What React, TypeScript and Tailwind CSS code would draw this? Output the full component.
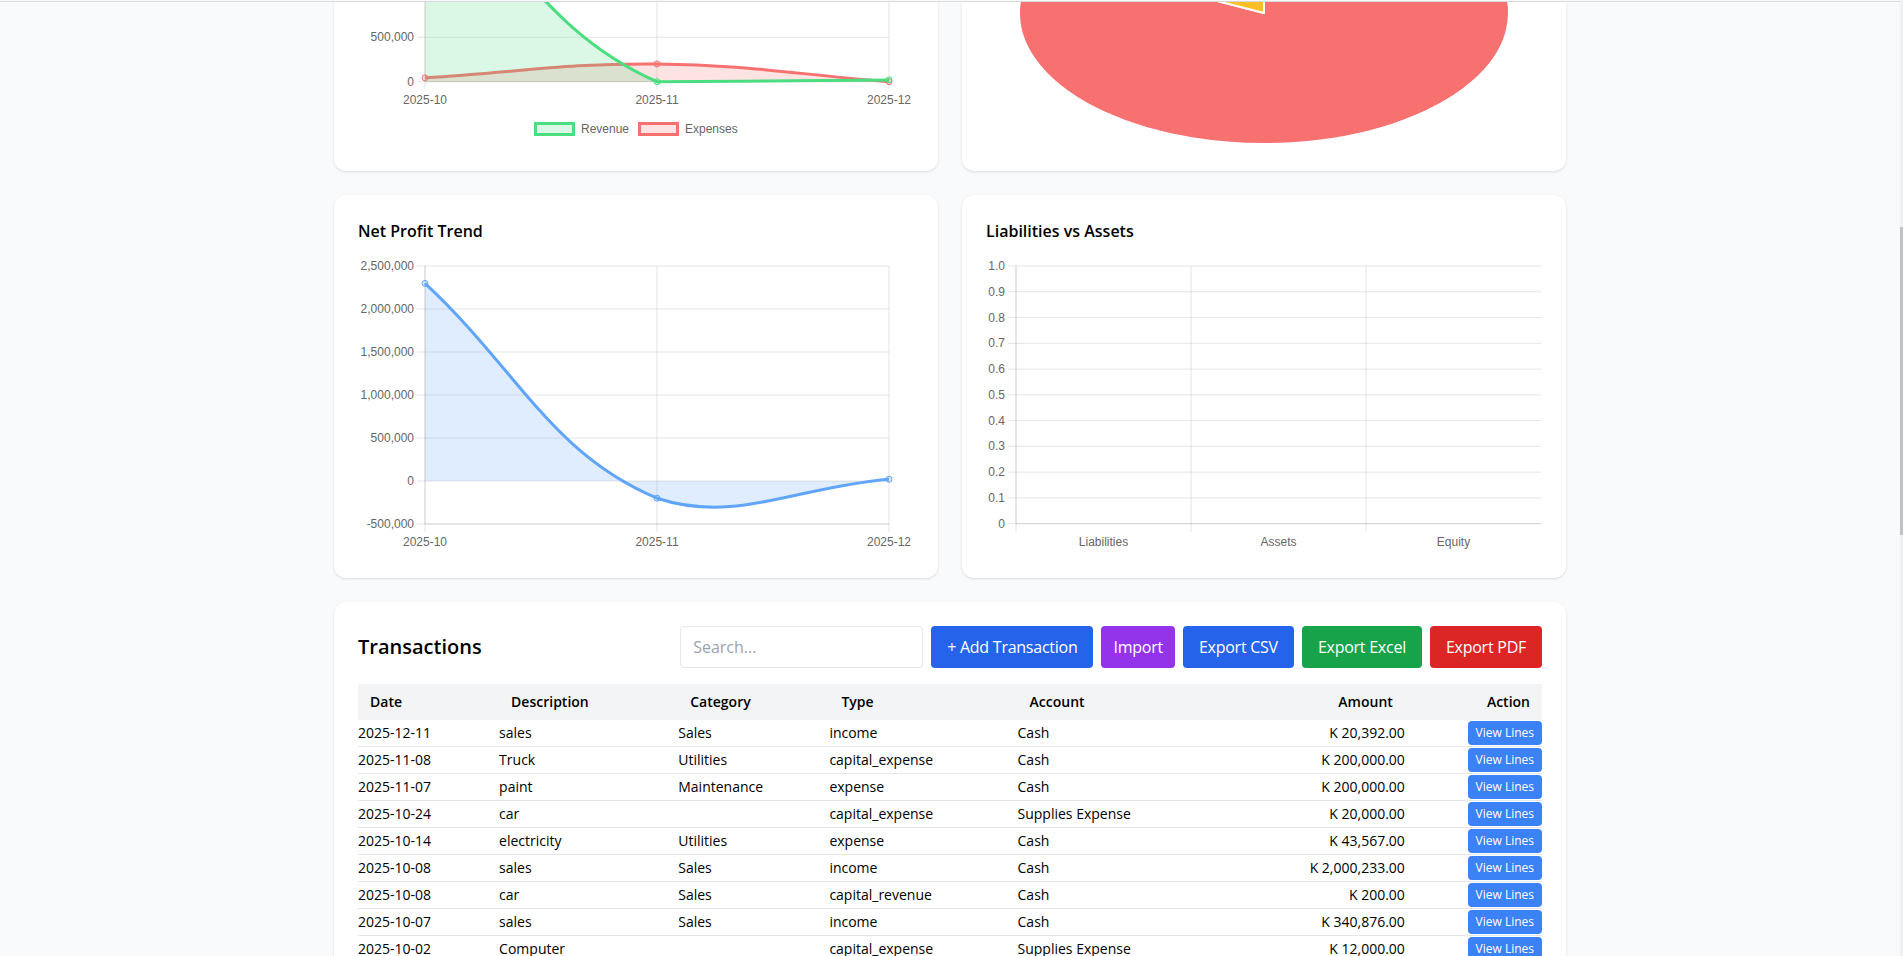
import React from "react";

type Pt = { x: number; y: number };
type Area = { left: number; right: number; top: number; bottom: number };

const GRID = "rgba(0,0,0,0.1)";
const TICK = "#666";
const CHART_FONT = "'Liberation Sans', Arial, sans-serif";

// same curve as chart.js line with tension 0.4 (control points capped to chart area)
function splinePath(pts: Pt[], area: Area, tension = 0.4) {
  const cps = pts.map((p, i) => {
    const a = pts[i - 1] ?? p;
    const b = pts[i + 1] ?? p;
    const d01 = Math.hypot(p.x - a.x, p.y - a.y);
    const d12 = Math.hypot(b.x - p.x, b.y - p.y);
    const sum = d01 + d12;
    const fa = sum ? (tension * d01) / sum : 0;
    const fb = sum ? (tension * d12) / sum : 0;
    return {
      inX: p.x - fa * (b.x - a.x),
      inY: p.y - fa * (b.y - a.y),
      outX: p.x + fb * (b.x - a.x),
      outY: p.y + fb * (b.y - a.y),
    };
  });
  const clamp = (v: number, lo: number, hi: number) => Math.max(Math.min(v, hi), lo);
  const inside = (p: Pt) =>
    p.x >= area.left - 0.5 && p.x <= area.right + 0.5 && p.y >= area.top - 0.5 && p.y <= area.bottom + 0.5;
  pts.forEach((p, i) => {
    if (!inside(p)) return;
    if (i > 0 && inside(pts[i - 1])) {
      cps[i].inX = clamp(cps[i].inX, area.left, area.right);
      cps[i].inY = clamp(cps[i].inY, area.top, area.bottom);
    }
    if (i < pts.length - 1 && inside(pts[i + 1])) {
      cps[i].outX = clamp(cps[i].outX, area.left, area.right);
      cps[i].outY = clamp(cps[i].outY, area.top, area.bottom);
    }
  });
  let d = `M${pts[0].x},${pts[0].y}`;
  for (let i = 1; i < pts.length; i++) {
    d += ` C${cps[i - 1].outX},${cps[i - 1].outY} ${cps[i].inX},${cps[i].inY} ${pts[i].x},${pts[i].y}`;
  }
  return d;
}

function Label({ x, y, anchor = "middle", children }: { x: number; y: number; anchor?: "start" | "middle" | "end"; children: React.ReactNode }) {
  return (
    <text x={x} y={y} textAnchor={anchor} dominantBaseline="central" fontSize={12} fill={TICK} fontFamily={CHART_FONT}>
      {children}
    </text>
  );
}

const MONTHS = ["2025-10", "2025-11", "2025-12"];
const XS = [67, 299, 531];

function Series({ pts, area, zero, line, fill }: { pts: Pt[]; area: Area; zero: number; line: string; fill: string }) {
  const d = splinePath(pts, area);
  return (
    <g>
      <path d={`${d} L${pts[pts.length - 1].x},${zero} L${pts[0].x},${zero} Z`} fill={fill} />
      <path d={d} fill="none" stroke={line} strokeWidth={3} />
      {pts.map((p, i) => (
        <circle key={i} cx={p.x} cy={p.y} r={3} fill={fill} stroke={line} strokeWidth={1} />
      ))}
    </g>
  );
}

function RevenueExpensesCard() {
  const zero = 79.7;
  const y = (v: number) => zero - (v / 500000) * 44.4;
  const area = { left: 67, right: 531, top: y(2500000), bottom: zero };
  const rev = [2341309, 0, 20392].map((v, i) => ({ x: XS[i], y: y(v) }));
  const exp = [43567, 200000, 0].map((v, i) => ({ x: XS[i], y: y(v) }));

  return (
    <div className="h-[169px] overflow-hidden rounded-b-xl bg-white px-6 shadow">
      <svg width={556} height={169} className="block">
        {[500000, 0].map((v) => (
          <line key={v} x1={59} x2={531} y1={y(v)} y2={y(v)} stroke={GRID} />
        ))}
        {XS.map((x) => (
          <line key={x} x1={x} x2={x} y1={-200} y2={zero + 8} stroke={GRID} />
        ))}
        <line x1={67} x2={67} y1={-200} y2={zero} stroke={GRID} />
        <line x1={67} x2={531} y1={zero} y2={zero} stroke={GRID} />
        <Label x={56} y={y(500000)} anchor="end">500,000</Label>
        <Label x={56} y={zero} anchor="end">0</Label>
        {MONTHS.map((m, i) => (
          <Label key={m} x={XS[i]} y={98}>{m}</Label>
        ))}
        <Series pts={exp} area={area} zero={zero} line="#f87171" fill="rgba(248,113,113,0.2)" />
        <Series pts={rev} area={area} zero={zero} line="#4ade80" fill="rgba(74,222,128,0.2)" />

        <rect x={177.5} y={121.5} width={38} height={11} fill="rgba(74,222,128,0.2)" stroke="#4ade80" strokeWidth={3} />
        <Label x={223} y={127} anchor="start">Revenue</Label>
        <rect x={281.5} y={121.5} width={38} height={11} fill="rgba(248,113,113,0.2)" stroke="#f87171" strokeWidth={3} />
        <Label x={327} y={127} anchor="start">Expenses</Label>
      </svg>
    </div>
  );
}

function ExpensePieCard() {
  const cx = 302;
  const cy = 11;
  const rx = 245;
  const ry = 131;
  const slices = [
    { value: 200000, color: "#f87171" },
    { value: 43567, color: "#fbbf24" },
  ];
  const total = slices.reduce((s, x) => s + x.value, 0);
  let angle = -Math.PI / 2;

  return (
    <div className="h-[169px] overflow-hidden rounded-b-xl bg-white shadow">
      <svg width={604} height={169} className="block">
        {slices.map((s, i) => {
          const a0 = angle;
          const a1 = angle + (s.value / total) * Math.PI * 2;
          angle = a1;
          const large = a1 - a0 > Math.PI ? 1 : 0;
          const d = `M${cx},${cy} L${cx + rx * Math.cos(a0)},${cy + ry * Math.sin(a0)} A${rx},${ry} 0 ${large} 1 ${
            cx + rx * Math.cos(a1)
          },${cy + ry * Math.sin(a1)} Z`;
          return <path key={i} d={d} fill={s.color} stroke="#fff" strokeWidth={2} strokeLinejoin="round" />;
        })}
      </svg>
    </div>
  );
}

function NetProfitCard() {
  const zero = 226;
  const y = (v: number) => zero - (v / 500000) * 43;
  const area = { left: 67, right: 531, top: y(2500000), bottom: y(-500000) };
  const pts = [2297742, -200000, 20392].map((v, i) => ({ x: XS[i], y: y(v) }));
  const ticks = [2500000, 2000000, 1500000, 1000000, 500000, 0, -500000];

  return (
    <div className="rounded-xl bg-white p-6 shadow">
      <h2 className="mb-3 text-base font-semibold leading-6">Net Profit Trend</h2>
      <svg width={556} height={299} className="block">
        {ticks.map((v) => (
          <line key={v} x1={59} x2={531} y1={y(v)} y2={y(v)} stroke={GRID} />
        ))}
        {XS.map((x) => (
          <line key={x} x1={x} x2={x} y1={area.top} y2={area.bottom + 8} stroke={GRID} />
        ))}
        <line x1={67} x2={67} y1={area.top} y2={area.bottom} stroke={GRID} />
        <line x1={67} x2={531} y1={area.bottom} y2={area.bottom} stroke={GRID} />
        {ticks.map((v) => (
          <Label key={v} x={56} y={y(v)} anchor="end">
            {v.toLocaleString("en-US")}
          </Label>
        ))}
        {MONTHS.map((m, i) => (
          <Label key={m} x={XS[i]} y={287}>{m}</Label>
        ))}
        <Series pts={pts} area={area} zero={zero} line="#60a5fa" fill="rgba(96,165,250,0.2)" />
      </svg>
    </div>
  );
}

function BalanceCard() {
  const top = 11;
  const bottom = 268.7;
  const left = 30;
  const right = 555;
  const step = (bottom - top) / 10;
  const cats = ["Liabilities", "Assets", "Equity"];
  const colW = (right - left) / 3;

  return (
    <div className="rounded-xl bg-white p-6 shadow">
      <h2 className="mb-3 text-base font-semibold leading-6">Liabilities vs Assets</h2>
      <svg width={556} height={299} className="block">
        {Array.from({ length: 11 }, (_, i) => (
          <line key={i} x1={left - 8} x2={right} y1={bottom - i * step} y2={bottom - i * step} stroke={GRID} />
        ))}
        {[0, 1, 2].map((i) => (
          <line key={i} x1={left + i * colW} x2={left + i * colW} y1={top} y2={bottom + 8} stroke={GRID} />
        ))}
        <line x1={left} x2={left} y1={top} y2={bottom} stroke={GRID} />
        <line x1={left} x2={right} y1={bottom} y2={bottom} stroke={GRID} />
        {Array.from({ length: 11 }, (_, i) => (
          <Label key={i} x={19} y={bottom - i * step} anchor="end">
            {i === 0 ? "0" : i === 10 ? "1.0" : (i / 10).toFixed(1)}
          </Label>
        ))}
        {cats.map((c, i) => (
          <Label key={c} x={left + colW * (i + 0.5)} y={287}>{c}</Label>
        ))}
      </svg>
    </div>
  );
}

const rows = [
  ["2025-12-11", "sales", "Sales", "income", "Cash", "K 20,392.00"],
  ["2025-11-08", "Truck", "Utilities", "capital_expense", "Cash", "K 200,000.00"],
  ["2025-11-07", "paint", "Maintenance", "expense", "Cash", "K 200,000.00"],
  ["2025-10-24", "car", "", "capital_expense", "Supplies Expense", "K 20,000.00"],
  ["2025-10-14", "electricity", "Utilities", "expense", "Cash", "K 43,567.00"],
  ["2025-10-08", "sales", "Sales", "income", "Cash", "K 2,000,233.00"],
  ["2025-10-08", "car", "Sales", "capital_revenue", "Cash", "K 200.00"],
  ["2025-10-07", "sales", "Sales", "income", "Cash", "K 340,876.00"],
  ["2025-10-02", "Computer", "", "capital_expense", "Supplies Expense", "K 12,000.00"],
  ["2025-10-01", "rent", "Rent", "expense", "Cash", "K 5,000.00"],
];

const btn = "rounded px-4 py-2 tracking-[-0.25px] text-white";

function TransactionsCard() {
  return (
    <div className="rounded-xl bg-white p-6 shadow">
      <div className="mb-4 flex items-center justify-between">
        <h2 className="text-xl font-semibold">Transactions</h2>
        <div className="flex gap-2">
          <input
            placeholder="Search..."
            className="w-[243px] rounded border border-[#e5e7eb] px-3 py-2 text-base outline-none placeholder:text-[#9ca3af]"
          />
          <button className={`${btn} bg-[#2563eb]`}>+ Add Transaction</button>
          <button className="rounded bg-[#9333ea] px-3 py-2 tracking-[-0.25px] text-white">Import</button>
          <button className={`${btn} bg-[#2563eb]`}>Export CSV</button>
          <button className={`${btn} bg-[#16a34a]`}>Export Excel</button>
          <button className={`${btn} bg-[#dc2626]`}>Export PDF</button>
        </div>
      </div>

      <table className="w-full table-fixed text-sm">
        <colgroup>
          <col className="w-[141px]" />
          <col className="w-[179px]" />
          <col className="w-[151px]" />
          <col className="w-[188px]" />
          <col className="w-[200px]" />
          <col className="w-[187px]" />
          <col className="w-[137px]" />
        </colgroup>
        <thead className="bg-[#f3f4f6]">
          <tr>
            <th className="px-3 py-2 text-left font-semibold">Date</th>
            <th className="px-3 py-2 text-left font-semibold">Description</th>
            <th className="px-3 py-2 text-left font-semibold">Category</th>
            <th className="px-3 py-2 text-left font-semibold">Type</th>
            <th className="px-3 py-2 text-left font-semibold">Account</th>
            <th className="px-3 py-2 text-right font-semibold">Amount</th>
            <th className="px-3 py-2 text-right font-semibold">Action</th>
          </tr>
        </thead>
        <tbody>
          {rows.map((r, i) => (
            <tr key={i} className="border-b border-[#e5e7eb]">
              <td className="py-px">{r[0]}</td>
              <td className="py-px">{r[1]}</td>
              <td className="py-px">{r[2]}</td>
              <td className="py-px">{r[3]}</td>
              <td className="py-px">{r[4]}</td>
              <td className="py-px text-right">{r[5]}</td>
              <td className="py-px text-right">
                <button className="rounded bg-[#3b82f6] px-2 py-1 text-xs text-white">View Lines</button>
              </td>
            </tr>
          ))}
        </tbody>
      </table>
    </div>
  );
}

export default function App() {
  return (
    <div className="flex h-screen overflow-hidden bg-[#f9fafb] font-['Open_Sans',sans-serif] text-black">
      <div className="flex min-w-0 flex-1 flex-col">
        <div className="h-[2px] shrink-0 border-b border-[#dadce0]" />
        <main className="mx-auto w-full max-w-7xl px-6">
          <div className="grid grid-cols-2 gap-6">
            <RevenueExpensesCard />
            <ExpensePieCard />
          </div>
          <div className="mt-6 grid grid-cols-2 gap-6">
            <NetProfitCard />
            <BalanceCard />
          </div>
          <div className="mt-6">
            <TransactionsCard />
          </div>
        </main>
      </div>
      <div className="w-[3px] shrink-0 bg-[#f1f1f1]">
        <div className="mt-[227px] h-[308px] bg-[#c1c1c1]" />
      </div>
    </div>
  );
}
